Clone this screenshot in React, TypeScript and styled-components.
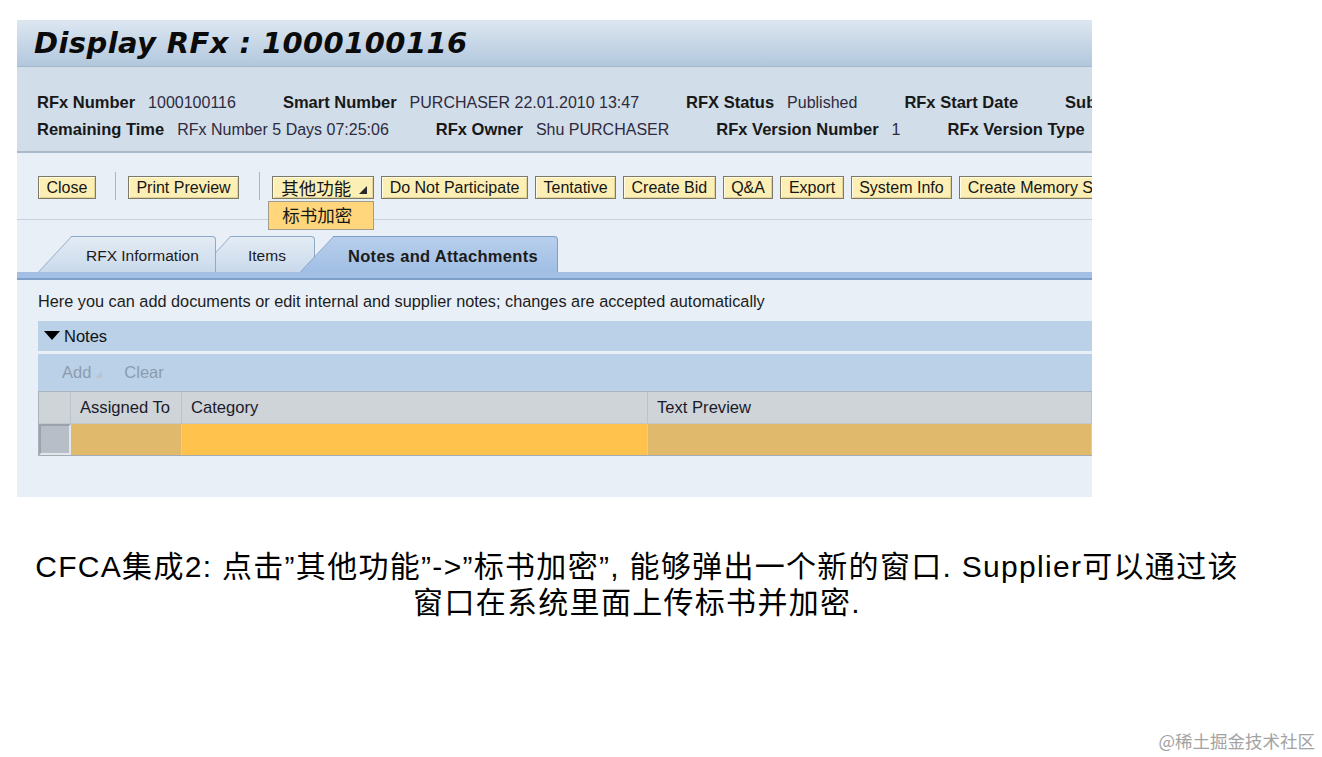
import React from 'react';
import styled, {createGlobalStyle} from 'styled-components';

const GlobalStyle = createGlobalStyle`
  html, body {
    margin: 0;
    padding: 0;
    background: #fff;
  }
  body {
    font-family: "Liberation Sans", Arial, "Noto Sans CJK SC", sans-serif;
  }
`;

const CJK = `"Noto Sans CJK SC", "Liberation Sans", sans-serif`;

const infoRows = [
  [
    ['RFx Number', '1000100116'],
    ['Smart Number', 'PURCHASER 22.01.2010 13:47'],
    ['RFX Status', 'Published'],
    ['RFx Start Date', ''],
    ['Submission Deadline', ''],
  ],
  [
    ['Remaining Time', 'RFx Number 5 Days 07:25:06'],
    ['RFx Owner', 'Shu PURCHASER'],
    ['RFx Version Number', '1'],
    ['RFx Version Type', ''],
  ],
];

const tailButtons = [
  'Do Not Participate',
  'Tentative',
  'Create Bid',
  'Q&A',
  'Export',
  'System Info',
  'Create Memory Snapshot',
];

export default function App() {
  return (
    <Page>
      <GlobalStyle />
      <Panel>
        <TitleBar>
          <Title>Display RFx : 1000100116</Title>
        </TitleBar>

        <InfoBar>
          {infoRows.map((row, i) => (
            <InfoRow key={i}>
              {row.map(([label, value]) => (
                <Pair key={label}>
                  <Label>{label}</Label>
                  {value && <Value>{value}</Value>}
                </Pair>
              ))}
            </InfoRow>
          ))}
        </InfoBar>

        <Toolbar>
          <Button>Close</Button>
          <Separator />
          <Button>Print Preview</Button>
          <Separator $wide />
          <MenuWrap>
            <Button $cjk>
              其他功能
              <MenuArrow viewBox="0 0 8 8">
                <polygon points="8,0 8,8 0,8" fill="#2a2a2a" />
              </MenuArrow>
            </Button>
            <Menu>标书加密</Menu>
          </MenuWrap>
          {tailButtons.map(b => (
            <Button key={b}>{b}</Button>
          ))}
        </Toolbar>

        <TabStrip>
          <Tab $w={144} $ml={55} $pl={14} $z={3}>
            RFX Information
          </Tab>
          <Tab $w={84} $ml={15} $pl={17} $z={1}>
            Items
          </Tab>
          <Tab $w={224} $ml={19} $pl={14} $z={2} $active>
            Notes and Attachments
          </Tab>
        </TabStrip>
        <TabBand />

        <Content>
          <Hint>
            Here you can add documents or edit internal and supplier notes;
            changes are accepted automatically
          </Hint>

          <SectionHeader>
            <svg width="16" height="10" viewBox="0 0 16 10">
              <polygon points="0,0 16,0 8,9" fill="#000" />
            </svg>
            <span>Notes</span>
          </SectionHeader>
          <SubToolbar>
            <Disabled>
              Add
              <svg width="7" height="7" viewBox="0 0 7 7">
                <polygon points="7,0 7,7 0,7" fill="#b9c5d2" />
              </svg>
            </Disabled>
            <Disabled>Clear</Disabled>
          </SubToolbar>

          <Table>
            <HeadCell />
            <HeadCell>Assigned To</HeadCell>
            <HeadCell>Category</HeadCell>
            <HeadCell>Text Preview</HeadCell>
            <SelectorCell />
            <DataCell $tone="dim" />
            <DataCell $tone="bright" />
            <DataCell $tone="dim" />
          </Table>
        </Content>
      </Panel>

      <Caption>
        CFCA集成2: 点击”其他功能”-&gt;”标书加密”, 能够弹出一个新的窗口. Supplier可以通过该
        <br />
        窗口在系统里面上传标书并加密.
      </Caption>

      <Watermark>@稀土掘金技术社区</Watermark>
    </Page>
  );
}

const Page = styled.div`
  position: relative;
  width: 1322px;
  height: 757px;
  overflow: hidden;
`;

const Panel = styled.div`
  margin: 20px 0 0 17px;
  width: 1075px;
  height: 477px;
  background: #e8eff6;
  overflow: hidden;
  display: flex;
  flex-direction: column;
`;

const TitleBar = styled.div`
  flex: none;
  height: 47px;
  box-sizing: border-box;
  padding-left: 17px;
  display: flex;
  align-items: center;
  background: linear-gradient(#dde7f1, #b2c7dd);
  border-bottom: 1px solid #a3b7cd;
`;

const Title = styled.h1`
  margin: 0;
  font-family: "DejaVu Sans", Verdana, sans-serif;
  font-style: italic;
  font-weight: bold;
  font-size: 29px;
  color: #0b0b0b;
  letter-spacing: 0.4px;
`;

const InfoBar = styled.div`
  flex: none;
  height: 86px;
  box-sizing: border-box;
  padding: 22px 0 0 20px;
  background: #d1dde8;
  border-bottom: 2px solid #a9b9c9;
`;

const InfoRow = styled.div`
  display: flex;
  align-items: center;
  gap: 47px;
  height: 27px;
  white-space: nowrap;
`;

const Pair = styled.div`
  display: flex;
  align-items: baseline;
  gap: 13px;
`;

const Label = styled.span`
  font-weight: bold;
  font-size: 16.5px;
  color: #181818;
`;

const Value = styled.span`
  font-size: 16px;
  color: #2e2a40;
`;

const Toolbar = styled.div`
  flex: none;
  position: relative;
  z-index: 5;
  height: 67px;
  box-sizing: border-box;
  padding: 23px 0 0 21px;
  display: flex;
  align-items: flex-start;
  gap: 7px;
  white-space: nowrap;
  border-bottom: 1px solid #c6d1dc;
`;

const Button = styled.button<{$cjk?: boolean}>`
  flex: none;
  display: flex;
  align-items: center;
  gap: 8px;
  height: 23px;
  margin: 0;
  padding: ${p => (p.$cjk ? '0 6px 0 8px' : '0 7.5px')};
  border: 1px solid #7d7969;
  background: #fcefb5;
  box-shadow: inset 1px 1px 0 #fffbe4, inset -1px -1px 0 #e2d394;
  font-family: ${p => (p.$cjk ? CJK : '"Liberation Sans", Arial, sans-serif')};
  font-size: ${p => (p.$cjk ? '17.5px' : '16px')};
  line-height: 21px;
  color: #161616;
  cursor: pointer;
`;

const MenuArrow = styled.svg`
  width: 8px;
  height: 8px;
  margin-top: 5px;
`;

const Separator = styled.div<{$wide?: boolean}>`
  flex: none;
  width: 1px;
  height: 28px;
  margin: -4px 5px 0 ${p => (p.$wide ? 13 : 12)}px;
  background: #a8b7c7;
`;

const MenuWrap = styled.div`
  position: relative;
  flex: none;
`;

const Menu = styled.div`
  position: absolute;
  top: 25px;
  left: -4px;
  width: 106px;
  height: 29px;
  box-sizing: border-box;
  padding-left: 13px;
  background: #ffd67c;
  border: 1px solid #a19d8c;
  font-family: ${CJK};
  font-size: 17.5px;
  line-height: 26px;
  color: #161616;
`;

const TabStrip = styled.div`
  flex: none;
  height: 52px;
  box-sizing: border-box;
  padding-top: 16px;
  display: flex;
  align-items: flex-end;
`;

const Tab = styled.div<{
  $w: number;
  $ml: number;
  $pl: number;
  $z: number;
  $active?: boolean;
}>`
  position: relative;
  z-index: ${p => p.$z};
  flex: none;
  width: ${p => p.$w}px;
  height: 36px;
  margin-left: ${p => p.$ml}px;
  padding-left: ${p => p.$pl}px;
  box-sizing: border-box;
  background: ${p =>
    p.$active
      ? 'linear-gradient(#b8cfec, #a0bee4)'
      : 'linear-gradient(#e4ecf5, #c9d9eb)'};
  border-top: 1px solid ${p => (p.$active ? '#7f9fc7' : '#8fa9c9')};
  border-right: 1px solid ${p => (p.$active ? '#7f9fc7' : '#8fa9c9')};
  border-top-right-radius: 4px;
  font-size: ${p => (p.$active ? '16.5px' : '15.5px')};
  letter-spacing: ${p => (p.$active ? '0.3px' : '0')};
  font-weight: ${p => (p.$active ? 'bold' : 'normal')};
  line-height: 38px;
  color: #1b1b1b;
  white-space: nowrap;

  &::before {
    content: '';
    position: absolute;
    z-index: -1;
    top: -1px;
    bottom: 0;
    left: -34px;
    width: 46px;
    background: inherit;
    border-top: 1px solid ${p => (p.$active ? '#7f9fc7' : '#8fa9c9')};
    border-left: 1px solid ${p => (p.$active ? '#7f9fc7' : '#8fa9c9')};
    transform: skewX(-43deg);
    transform-origin: bottom left;
  }
`;

const TabBand = styled.div`
  flex: none;
  height: 6px;
  background: #a3c0e4;
  border-bottom: 2px solid #7f9fc6;
`;

const Content = styled.div`
  flex: 1;
  padding: 11px 0 0 21px;
`;

const Hint = styled.div`
  font-size: 16.3px;
  line-height: 20px;
  color: #1c1c1c;
  white-space: nowrap;
`;

const SectionHeader = styled.div`
  margin-top: 10px;
  height: 30px;
  display: flex;
  align-items: center;
  gap: 4px;
  padding-left: 6px;
  background: #bad1e8;
  font-size: 16.5px;
  color: #111;
`;

const SubToolbar = styled.div`
  margin-top: 3px;
  height: 37px;
  display: flex;
  align-items: center;
  gap: 22px;
  padding-left: 24px;
  background: #bad1e8;
`;

const Disabled = styled.span`
  display: flex;
  align-items: flex-end;
  gap: 4px;
  font-size: 16.5px;
  color: #8d9cad;

  svg {
    margin-bottom: 4px;
  }
`;

const Table = styled.div`
  display: grid;
  grid-template-columns: 32px 111px 466px 1fr;
  grid-template-rows: 32px 31px;
  border-top: 1px solid #a9b3bd;
  border-left: 1px solid #a9b3bd;
  border-bottom: 1px solid #a3acb5;
`;

const HeadCell = styled.div`
  box-sizing: border-box;
  padding-left: 9px;
  background: #cfd4d9;
  border-right: 1px solid #b9c3cd;
  border-bottom: 1px solid #bfc7cf;
  font-size: 16.6px;
  line-height: 31px;
  color: #1b1b2b;
  white-space: nowrap;
`;

const SelectorCell = styled.div`
  box-sizing: border-box;
  background: #b7bec7;
  border: 2px solid #9aa3ad;
  border-right-color: #e4e8ec;
  border-bottom-color: #e4e8ec;
`;

const DataCell = styled.div<{$tone: 'dim' | 'bright'}>`
  background: ${p => (p.$tone === 'bright' ? '#ffc34d' : '#e0b96c')};
  border-right: 1px solid #d8cdb6;
`;

const Caption = styled.div`
  width: 1274px;
  margin-top: 52px;
  text-align: center;
  font-family: "Liberation Sans", Arial, "Noto Sans CJK SC", sans-serif;
  font-size: 30px;
  line-height: 36px;
  letter-spacing: 1.3px;
  color: #000;
`;

const Watermark = styled.div`
  position: absolute;
  right: 7px;
  bottom: 4px;
  font-family: ${CJK};
  font-size: 17.5px;
  line-height: 24px;
  color: #a3a3a3;
`;
